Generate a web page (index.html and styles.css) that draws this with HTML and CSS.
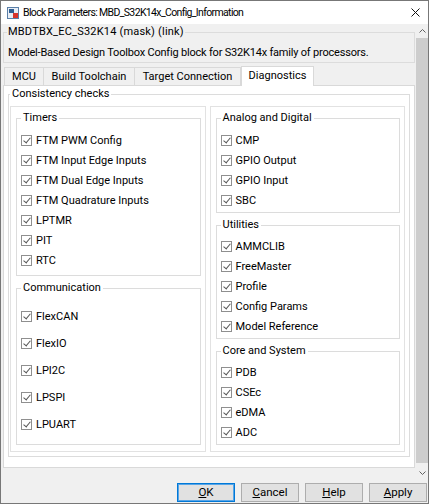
FILE: index.html
```html
<!DOCTYPE html>
<html>
<head>
<meta charset="utf-8">
<link rel="stylesheet" href="styles.css">
</head>
<body>
<div class="window">
  <div class="titlebar">
    <svg class="app-icon" width="12" height="12" viewBox="0 0 12 12">
      <rect x="0.5" y="0.5" width="11" height="11" fill="#e8eef6" stroke="#5a7fa8"/>
      <rect x="2" y="2" width="5" height="4" fill="#2f5f93"/>
      <rect x="6" y="6" width="5" height="5" fill="#d9342b"/>
    </svg>
    <span class="title">Block Parameters: MBD_S32K14x_Config_Information</span>
    <svg class="close" width="9" height="9" viewBox="0 0 9 9">
      <path d="M0.5 0.5L8.5 8.5M8.5 0.5L0.5 8.5" stroke="#111" stroke-width="1"/>
    </svg>
  </div>
  <div class="main">
    <div class="content">
      <fieldset class="mask">
        <legend>MBDTBX_EC_S32K14 (mask) (link)</legend>
        <p class="desc">Model-Based Design Toolbox Config block for S32K14x family of processors.</p>
      </fieldset>
      <div class="tabs">
        <div class="tab tab-mcu">MCU</div>
        <div class="tab tab-build">Build Toolchain</div>
        <div class="tab tab-target">Target Connection</div>
        <div class="tab tab-diag active">Diagnostics</div>
      </div>
      <div class="panel">
        <fieldset class="group consistency">
          <legend>Consistency checks</legend>
          <div class="columns">
            <div class="col">
              <fieldset class="box timers">
                <legend>Timers</legend>
                <div class="rows">
                  <label class="row"><span class="cb"></span>FTM PWM Config</label>
                  <label class="row"><span class="cb"></span>FTM Input Edge Inputs</label>
                  <label class="row"><span class="cb"></span>FTM Dual Edge Inputs</label>
                  <label class="row"><span class="cb"></span>FTM Quadrature Inputs</label>
                  <label class="row"><span class="cb"></span>LPTMR</label>
                  <label class="row"><span class="cb"></span>PIT</label>
                  <label class="row"><span class="cb"></span>RTC</label>
                </div>
              </fieldset>
              <fieldset class="box comm">
                <legend>Communication</legend>
                <div class="rows">
                  <label class="row"><span class="cb"></span>FlexCAN</label>
                  <label class="row"><span class="cb"></span>FlexIO</label>
                  <label class="row"><span class="cb"></span>LPI2C</label>
                  <label class="row"><span class="cb"></span>LPSPI</label>
                  <label class="row"><span class="cb"></span>LPUART</label>
                </div>
              </fieldset>
            </div>
            <div class="col">
              <fieldset class="box analog">
                <legend>Analog and Digital</legend>
                <div class="rows">
                  <label class="row"><span class="cb"></span>CMP</label>
                  <label class="row"><span class="cb"></span>GPIO Output</label>
                  <label class="row"><span class="cb"></span>GPIO Input</label>
                  <label class="row"><span class="cb"></span>SBC</label>
                </div>
              </fieldset>
              <fieldset class="box utilities">
                <legend>Utilities</legend>
                <div class="rows">
                  <label class="row"><span class="cb"></span>AMMCLIB</label>
                  <label class="row"><span class="cb"></span>FreeMaster</label>
                  <label class="row"><span class="cb"></span>Profile</label>
                  <label class="row"><span class="cb"></span>Config Params</label>
                  <label class="row"><span class="cb"></span>Model Reference</label>
                </div>
              </fieldset>
              <fieldset class="box core">
                <legend>Core and System</legend>
                <div class="rows">
                  <label class="row"><span class="cb"></span>PDB</label>
                  <label class="row"><span class="cb"></span>CSEc</label>
                  <label class="row"><span class="cb"></span>eDMA</label>
                  <label class="row"><span class="cb"></span>ADC</label>
                </div>
              </fieldset>
            </div>
          </div>
        </fieldset>
      </div>
    </div>
    <div class="scrollbar">
      <div class="sb-btn">
        <svg width="7" height="4" viewBox="0 0 7 4"><path d="M0.5 3.5L3.5 0.5L6.5 3.5" fill="none" stroke="#606060"/></svg>
      </div>
      <div class="sb-thumb"></div>
      <div class="sb-btn">
        <svg width="7" height="4" viewBox="0 0 7 4"><path d="M0.5 0.5L3.5 3.5L6.5 0.5" fill="none" stroke="#606060"/></svg>
      </div>
    </div>
  </div>
  <div class="footer">
    <button class="btn default"><u>O</u>K</button>
    <button class="btn"><u>C</u>ancel</button>
    <button class="btn"><u>H</u>elp</button>
    <button class="btn"><u>A</u>pply</button>
  </div>
</div>
</body>
</html>
```

FILE: styles.css
```css
html, body {
  margin: 0;
  padding: 0;
}
body {
  font-family: Roboto, "Open Sans", "Liberation Sans", sans-serif;
  font-size: 11px;
  color: #000;
  background: #f0f0f0;
}
.window {
  width: 429px;
  height: 504px;
  box-sizing: border-box;
  border: 1px solid #777;
  display: flex;
  flex-direction: column;
  background: #f0f0f0;
  overflow: hidden;
}
.titlebar {
  height: 23px;
  flex: none;
  background: #fff;
  display: flex;
  align-items: center;
  padding-left: 6px;
}
.app-icon {
  flex: none;
  margin-top: 1px;
}
.title {
  margin-left: 4px;
  flex: 1;
  line-height: 16px;
  font-size: 10.5px;
  letter-spacing: -0.65px;
}
.close {
  flex: none;
  margin-right: 8px;
}
.main {
  height: 455px;
  flex: none;
  display: flex;
}
.content {
  flex: 1;
  padding-left: 2px;
  min-width: 0;
}
fieldset {
  margin: 0;
  min-width: 0;
  border: 1px solid #dcdcdc;
}
legend {
  line-height: 16px;
  padding: 0 2px;
}
.mask {
  padding: 0 4px 1px 4px;
}
.mask legend {
  padding: 0 1px;
  margin-left: -1px;
  letter-spacing: 0.2px;
}
.desc {
  margin: 5px 0 0 0;
  line-height: 16px;
  letter-spacing: -0.2px;
}
.tabs {
  margin-top: 4px;
  height: 18px;
  display: flex;
  align-items: flex-end;
  padding-left: 1px;
}
.tab {
  height: 18px;
  box-sizing: border-box;
  border: 1px solid #d9d9d9;
  border-bottom: none;
  background: #f0f0f0;
  line-height: 16px;
  padding-top: 1px;
  text-align: center;
  margin-left: -1px;
}
.tab-mcu {
  width: 40px;
  margin-left: 0;
}
.tab-build {
  width: 92px;
}
.tab-target {
  width: 107px;
}
.tab.active {
  width: 73px;
  height: 20px;
  margin-bottom: -1px;
  margin-left: 0;
  background: #fff;
  position: relative;
  z-index: 1;
  padding-top: 1px;
}
.panel {
  background: #fff;
  border: 1px solid #d9d9d9;
}
.consistency {
  margin: 0 4px 10px 4px;
  padding: 4px 4px 4px 1px;
}
.consistency > legend {
  padding: 0 2px;
}
.columns {
  display: grid;
  grid-template-columns: 1fr 1fr;
  gap: 4px;
}
.col {
  border: 1px solid #e2e2e2;
  padding: 3px 4px 6px 5px;
  display: flex;
  flex-direction: column;
  gap: 4px;
}
.box {
  padding: 3px 4px 2px 4px;
}
.timers {
  padding-top: 4px;
  padding-bottom: 5px;
}
.analog {
  padding-top: 4px;
  padding-bottom: 2px;
}
.comm {
  flex: 1;
  padding-top: 10px;
  padding-bottom: 0;
}
.rows {
  display: flex;
  flex-direction: column;
}
.comm .rows {
  gap: 7px;
}
.row {
  height: 20px;
  display: flex;
  align-items: center;
  gap: 4px;
  white-space: nowrap;
}
.cb {
  width: 11px;
  height: 11px;
  box-sizing: border-box;
  border: 1px solid #8f8f8f;
  background: #fff;
  position: relative;
  flex: none;
}
.cb::after {
  content: "";
  position: absolute;
  left: 3px;
  top: 0px;
  width: 3px;
  height: 6px;
  border: solid #555;
  border-width: 0 1px 1px 0;
  transform: rotate(40deg);
}
.scrollbar {
  width: 13px;
  flex: none;
  display: flex;
  flex-direction: column;
  padding-left: 1px;
  box-sizing: border-box;
}
.sb-btn {
  height: 13px;
  flex: none;
  display: flex;
  align-items: center;
  justify-content: center;
}
.sb-thumb {
  flex: 1;
  background: #cdcdcd;
  margin: 1px 0 3px 0;
}
.footer {
  flex: 1;
  display: flex;
  justify-content: flex-end;
  align-items: flex-start;
  padding-top: 4px;
  padding-right: 1px;
  gap: 6px;
}
.btn {
  width: 58px;
  height: 19px;
  box-sizing: border-box;
  border: 1px solid #adadad;
  background: #e1e1e1;
  font-family: inherit;
  font-size: 11.5px;
  line-height: 15px;
  padding: 0;
  color: #000;
}
.btn.default {
  border: 1px solid #0078d7;
  box-shadow: inset 0 0 0 1px #58a5e6;
}
```
